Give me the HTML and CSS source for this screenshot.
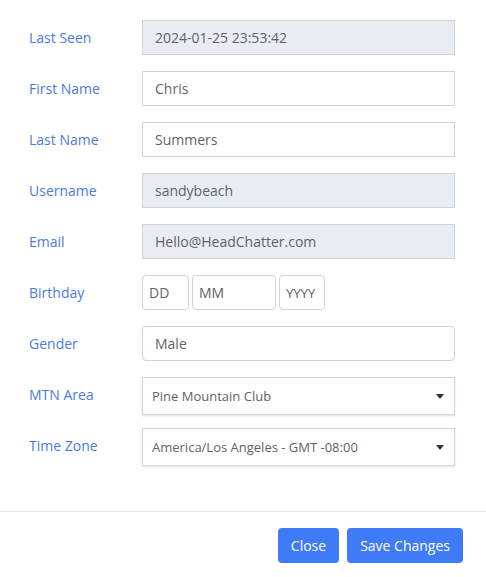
FILE: index.html
```html
<!DOCTYPE html>
<html>
<head>
<meta charset="utf-8">
<link rel="stylesheet" href="styles.css">
</head>
<body>
<div class="modal">
  <form class="form">
    <div class="row">
      <label class="label">Last Seen</label>
      <div class="field input readonly">2024-01-25 23:53:42</div>
    </div>
    <div class="row">
      <label class="label">First Name</label>
      <div class="field input">Chris</div>
    </div>
    <div class="row">
      <label class="label">Last Name</label>
      <div class="field input">Summers</div>
    </div>
    <div class="row">
      <label class="label">Username</label>
      <div class="field input readonly">sandybeach</div>
    </div>
    <div class="row">
      <label class="label">Email</label>
      <div class="field input readonly">Hello@HeadChatter.com</div>
    </div>
    <div class="row">
      <label class="label">Birthday</label>
      <div class="bday">
        <div class="small dd">DD</div>
        <div class="small mm">MM</div>
        <div class="small yy">YYYY</div>
      </div>
    </div>
    <div class="row">
      <label class="label">Gender</label>
      <div class="field input rounded">Male</div>
    </div>
    <div class="row">
      <label class="label">MTN Area</label>
      <div class="field select"><span>Pine Mountain Club</span><span class="caret"></span></div>
    </div>
    <div class="row">
      <label class="label">Time Zone</label>
      <div class="field select"><span>America/Los Angeles - GMT -08:00</span><span class="caret"></span></div>
    </div>
  </form>
  <div class="footer">
    <button type="button" class="btn">Close</button>
    <button type="button" class="btn">Save Changes</button>
  </div>
</div>
</body>
</html>
```
FILE: styles.css
```css
* { box-sizing: border-box; }
body {
  margin: 0;
  background: #fff;
  font-family: "Open Sans", "Noto Sans", sans-serif;
  font-size: 14px;
}
.form {
  padding: 20px 31px 0 29px;
  height: 512px;
  border-bottom: 1px solid #e6e6e6;
}
.row {
  display: flex;
  align-items: flex-start;
  height: 34px;
  margin-bottom: 17px;
}
.label {
  width: 113px;
  flex: none;
  line-height: 35px;
  color: #4c7ae0;
}
.field {
  flex: 1;
  height: 35px;
  border: 1px solid #cfd3da;
  color: #5f6368;
  display: flex;
  align-items: center;
}
.input { padding-left: 12px; }
.readonly { background: #e9ecf3; }
.rounded { border-radius: 4px; }
.bday { display: flex; gap: 3px; }
.small {
  height: 35px;
  border: 1px solid #cfd3da;
  border-radius: 4px;
  display: flex;
  align-items: center;
  padding-left: 6px;
  color: #5f6368;
}
.dd { width: 47px; }
.mm { width: 84px; }
.yy { width: 46px; font-size: 13.5px; letter-spacing: -0.3px; }
.select {
  height: 38px;
  padding: 0 10px 0 9px;
  font-size: 13px;
  justify-content: space-between;
  box-shadow: 0 1px 2px rgba(0,0,0,0.12);
  border-color: #d6d6d6;
}
.caret {
  width: 0; height: 0;
  border-left: 4px solid transparent;
  border-right: 4px solid transparent;
  border-top: 5px solid #333;
}
.footer {
  display: flex;
  justify-content: flex-end;
  gap: 8px;
  padding: 16px 23px 0 0;
}
.btn {
  height: 35px;
  border: none;
  border-radius: 4px;
  background: #3f7bf6;
  color: #fff;
  font-family: "Open Sans", "Noto Sans", sans-serif;
  font-size: 14px;
  padding: 0 13px;
}
```
